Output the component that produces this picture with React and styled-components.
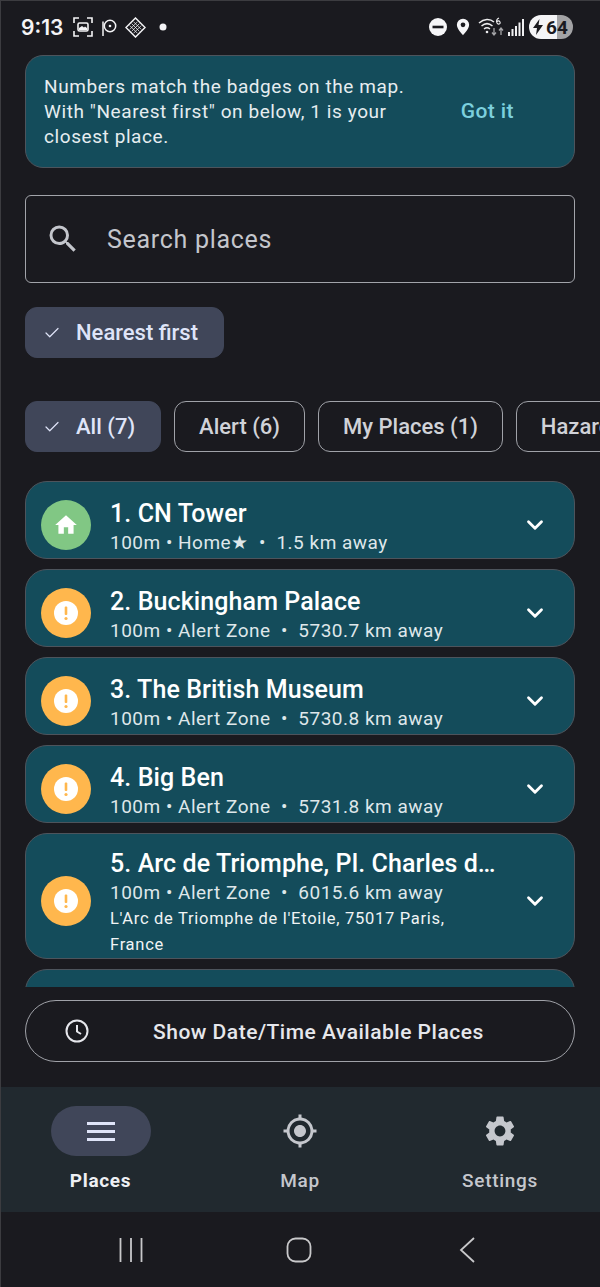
import React from "react";
import styled, { createGlobalStyle } from "styled-components";
import { Check, ChevronDown } from "lucide-react";

const GlobalStyle = createGlobalStyle`
  html, body {
    margin: 0;
    padding: 0;
    background: #1a1a1f;
    font-family: Roboto, "Noto Sans", sans-serif;
  }
  * {
    box-sizing: border-box;
  }
`;

const Screen = styled.div`
  display: flex;
  flex-direction: column;
  width: 600px;
  height: 1287px;
  overflow: hidden;
  background: #1a1a1f;
  border-left: 1px solid #3c3c40;
  border-top: 1px solid #3c3c40;
`;

const StatusBar = styled.div`
  display: flex;
  justify-content: space-between;
  align-items: center;
  height: 54px;
  padding: 0 27px 2px 20px;
  color: #f4f4f6;
  flex: none;
`;

const StatusGroup = styled.div`
  display: flex;
  align-items: center;
`;

const StatusIcon = styled.svg`
  margin-left: ${(p) => p.$left || 0}px;
  flex: none;
`;

const Time = styled.span`
  font-family: Inter, Roboto, sans-serif;
  font-size: 21px;
  font-weight: 600;
  width: 43px;
  white-space: nowrap;
`;

const Battery = styled.div`
  display: flex;
  align-items: center;
  gap: 3px;
  width: 44px;
  height: 24px;
  margin-left: 5px;
  padding-left: 4px;
  border-radius: 12px;
  color: #1a1a1f;
  font-family: Roboto, sans-serif;
  font-size: 19px;
  font-weight: 700;
  background: linear-gradient(to right, #f4f4f6 0 64%, #a3a3a5 64% 100%);
`;

const Main = styled.div`
  display: flex;
  flex-direction: column;
  padding: 0 25px 0 24px;
  flex: none;
  height: 1007px;
`;

const Banner = styled.div`
  display: flex;
  align-items: center;
  justify-content: space-between;
  flex: none;
  height: 113px;
  padding: 0 60px 0 18px;
  background: #144c5b;
  border: 1px solid #4d545c;
  border-radius: 18px;
  color: #e6edf0;
  font-size: 19px;
  line-height: 25px;
  letter-spacing: 0.58px;
`;

const BannerAction = styled.span`
  color: #7cd0de;
  font-size: 21px;
  font-weight: 500;
  letter-spacing: 0.4px;
`;

const SearchBox = styled.div`
  display: flex;
  align-items: center;
  gap: 26px;
  flex: none;
  height: 88px;
  margin-top: 27px;
  padding-left: 19px;
  border: 1px solid #a2a4aa;
  border-radius: 6px;
  color: #c4c6cc;
  font-size: 25px;
  letter-spacing: 0.7px;
`;

const ChipRow = styled.div`
  display: flex;
  gap: 13px;
  margin-top: ${(p) => p.$top}px;
  width: 600px;
  flex: none;
`;

const Chip = styled.div`
  display: flex;
  align-items: center;
  flex: none;
  gap: 15px;
  height: 51px;
  padding: ${(p) => (p.$selected ? "0 25px 0 17px" : "0 24px")};
  border-radius: 12px;
  border: 1px solid ${(p) => (p.$selected ? "#404659" : "#a0a2a8")};
  background: ${(p) => (p.$selected ? "#404659" : "transparent")};
  color: ${(p) => (p.$selected ? "#dfe4f8" : "#d0d2d8")};
  font-size: 22px;
  font-weight: 500;
`;

const List = styled.div`
  display: flex;
  flex-direction: column;
  gap: 10px;
  height: 506px;
  margin-top: 29px;
  overflow: hidden;
  flex: none;
`;

const Card = styled.div`
  display: flex;
  align-items: center;
  flex: none;
  height: ${(p) => (p.$tall ? 126 : 78)}px;
  padding: 10px 26px 0 15px;
  background: #144c5b;
  border: 1px solid #4d545c;
  border-radius: 22px;
`;

const Badge = styled.div`
  display: flex;
  align-items: center;
  justify-content: center;
  width: 50px;
  height: 50px;
  border-radius: 50%;
  background: ${(p) => p.$color};
  flex: none;
`;

const CardBody = styled.div`
  flex: 1;
  min-width: 0;
  margin: 5px 24px 0 19px;
`;

const CardTitle = styled.div`
  color: #ffffff;
  font-size: 25px;
  font-weight: 500;
  line-height: 30px;
  letter-spacing: 0.1px;
  white-space: nowrap;
  overflow: hidden;
  text-overflow: ellipsis;
`;

const CardMeta = styled.div`
  color: #dfe7ea;
  font-size: 19px;
  line-height: 26px;
  letter-spacing: 0.5px;
  margin-top: 1px;
  white-space: pre;
`;

const CardAddress = styled.div`
  color: #f0f4f5;
  font-size: 16.5px;
  font-weight: 400;
  line-height: 26px;
  letter-spacing: 0.72px;
  max-width: 345px;
`;

const TimeButton = styled.div`
  display: flex;
  align-items: center;
  flex: none;
  height: 62px;
  margin-top: 13px;
  padding-left: 39px;
  border: 1px solid #a0a2a8;
  border-radius: 31px;
  color: #e6e7ec;
  font-size: 21px;
  font-weight: 500;
  letter-spacing: 0.5px;
`;

const TimeLabel = styled.span`
  margin-left: 64px;
  padding-top: 1px;
`;

const NavBar = styled.div`
  display: grid;
  grid-template-columns: 199px 200px 200px;
  height: 125px;
  margin-top: 25px;
  background: #21292f;
  flex: none;
`;

const NavItem = styled.div`
  display: flex;
  flex-direction: column;
  align-items: center;
  padding-top: 19px;
  color: ${(p) => (p.$active ? "#eef0f4" : "#c5c7cd")};
  font-size: 19px;
  font-weight: ${(p) => (p.$active ? 700 : 500)};
  letter-spacing: 0.7px;
`;

const NavIcon = styled.div`
  display: flex;
  align-items: center;
  justify-content: center;
  width: 100px;
  height: 50px;
  border-radius: 25px;
  background: ${(p) => (p.$active ? "#404659" : "transparent")};
  margin-bottom: 13px;
`;

const SystemBar = styled.div`
  display: flex;
  flex: 1;
  align-items: center;
  justify-content: center;
  padding-right: 3px;
`;

const SystemSlot = styled.div`
  display: flex;
  justify-content: center;
  width: 168px;
`;

const HomeIcon = () => (
  <svg width="26" height="26" viewBox="0 0 24 24" fill="#fff">
    <path d="M10 20v-6h4v6h5v-8h3L12 3 2 12h3v8z" />
  </svg>
);

const AlertIcon = () => (
  <svg width="26" height="26" viewBox="0 0 26 26">
    <circle cx="13" cy="13" r="12" fill="#fff" />
    <rect x="11.7" y="6.5" width="2.6" height="8.5" rx="1" fill="#ffb74d" />
    <circle cx="13" cy="18.5" r="1.6" fill="#ffb74d" />
  </svg>
);

const cards = [
  { n: "1. CN Tower", meta: "100m • Home★  •  1.5 km away", home: true },
  { n: "2. Buckingham Palace", meta: "100m • Alert Zone  •  5730.7 km away" },
  { n: "3. The British Museum", meta: "100m • Alert Zone  •  5730.8 km away" },
  { n: "4. Big Ben", meta: "100m • Alert Zone  •  5731.8 km away" },
  {
    n: "5. Arc de Triomphe, Pl. Charles de Gaulle",
    meta: "100m • Alert Zone  •  6015.6 km away",
    address: "L'Arc de Triomphe de l'Etoile, 75017 Paris, France",
  },
];

export default function App() {
  return (
    <Screen>
      <GlobalStyle />
      <StatusBar>
        <StatusGroup>
          <Time>9:13</Time>
          <StatusIcon $left={9} width="20" height="20" viewBox="0 0 20 20" fill="none" stroke="#f4f4f6" strokeWidth="1.6">
            <path d="M1 6V1h5M14 1h5v5M19 14v5h-5M6 19H1v-5" />
            <rect x="5" y="6" width="10" height="8" rx="1.5" />
            <path d="M6 11l3-2 2 1.5 1-1 2 1.5v2H6z" fill="#f4f4f6" stroke="none" />
          </StatusIcon>
          <StatusIcon $left={9} width="15" height="18" viewBox="0 0 15 18" fill="none" stroke="#f4f4f6" strokeWidth="1.5">
            <path d="M1 18V3.5" />
            <circle cx="8" cy="8" r="5.7" />
            <circle cx="8" cy="8" r="1.3" fill="#f4f4f6" stroke="none" />
          </StatusIcon>
          <StatusIcon $left={8} width="21" height="21" viewBox="0 0 22 22" fill="none" stroke="#f4f4f6" strokeWidth="1.5">
            <path d="M11 1l10 10-10 10L1 11z" />
            <path d="M7 7l8 8M5 9l8 8M9 5l8 8M15 7l-8 8M17 9l-8 8M13 5l-8 8" strokeWidth="1" opacity="0.8" />
          </StatusIcon>
          <StatusIcon $left={13} width="8" height="8" viewBox="0 0 8 8">
            <circle cx="4" cy="4" r="3.5" fill="#f4f4f6" />
          </StatusIcon>
        </StatusGroup>
        <StatusGroup>
          <StatusIcon width="18" height="18" viewBox="0 0 18 18">
            <circle cx="9" cy="9" r="9" fill="#f6f6f8" />
            <rect x="3.5" y="7.7" width="11" height="2.6" fill="#1a1a1f" />
          </StatusIcon>
          <StatusIcon $left={9} width="14" height="18" viewBox="0 0 16 19">
            <path d="M8 0a7 7 0 0 1 7 7c0 4.500-5 9.500-7 12-2-2.500-7-7.500-7-12a7 7 0 0 1 7-7z" fill="#f6f6f8" />
            <circle cx="8" cy="7" r="2.700" fill="#1a1a1f" />
          </StatusIcon>
          <StatusIcon $left={8} width="26" height="20" viewBox="0 0 26 20" fill="none" stroke="#ececee" strokeWidth="1.5">
            <path d="M1 6c5-4.500 11-4.500 15-1M3.500 9c3.500-3 7.500-3 11 0M6 12c2-1.600 4-1.600 6 0" />
            <circle cx="9" cy="15" r="1.300" fill="#ececee" stroke="none" />
            <path d="M21 1c-2 1-3 3-2 5s4 1 3-1-3-1-3 0" strokeWidth="1.100" />
            <path d="M16 11v7M14 15.500l2 2.500 2-2.500M23 18v-7M21 13.500l2-2.500 2 2.500" stroke="#a5a5a8" strokeWidth="1.300" />
          </StatusIcon>
          <StatusIcon $left={4} width="16" height="17" viewBox="0 0 16 17" fill="#f0f0f2">
            <rect x="0" y="13" width="2" height="4" />
            <rect x="3.500" y="10" width="2" height="7" />
            <rect x="7" y="7" width="2" height="10" />
            <rect x="10.500" y="3.500" width="2" height="13.500" />
            <rect x="14" y="0" width="2" height="17" />
          </StatusIcon>
          <Battery>
            <svg width="10" height="16" viewBox="0 0 10 16" fill="#1a1a1f">
              <path d="M6.500 0L0 9h4l-1 7 7-10H5.500z" />
            </svg>
            64
          </Battery>
        </StatusGroup>
      </StatusBar>

      <Main>
        <Banner>
          <div>
            Numbers match the badges on the map.
            <br />
            With "Nearest first" on below, 1 is your
            <br />
            closest place.
          </div>
          <BannerAction>Got it</BannerAction>
        </Banner>

        <SearchBox>
          <svg width="36" height="36" viewBox="0 0 24 24" fill="#c4c6cc">
            <path d="M15.500 14h-.79l-.28-.27A6.470 6.470 0 0 0 16 9.500 6.500 6.500 0 1 0 9.500 16c1.610 0 3.090-.59 4.230-1.570l.27.28v.79l5 4.990L20.490 19l-4.990-5zm-6 0C7.010 14 5 11.990 5 9.500S7.010 5 9.500 5 14 7.010 14 9.500 11.990 14 9.500 14z" />
          </svg>
          Search places
        </SearchBox>

        <ChipRow $top={24}>
          <Chip $selected>
            <Check size={18} strokeWidth={1.6} />
            Nearest first
          </Chip>
        </ChipRow>

        <ChipRow $top={43}>
          <Chip $selected>
            <Check size={18} strokeWidth={1.6} />
            All (7)
          </Chip>
          <Chip>Alert (6)</Chip>
          <Chip>My Places (1)</Chip>
          <Chip>Hazard (0)</Chip>
        </ChipRow>

        <List>
          {cards.map((c) => (
            <Card key={c.n} $tall={!!c.address}>
              <Badge $color={c.home ? "#81c784" : "#ffb74d"}>
                {c.home ? <HomeIcon /> : <AlertIcon />}
              </Badge>
              <CardBody>
                <CardTitle>{c.n}</CardTitle>
                <CardMeta>{c.meta}</CardMeta>
                {c.address && <CardAddress>{c.address}</CardAddress>}
              </CardBody>
              <ChevronDown size={26} strokeWidth={2.6} color="#fff" />
            </Card>
          ))}
          <Card />
        </List>

        <TimeButton>
          <svg width="24" height="24" viewBox="0 0 24 24" fill="none" stroke="#e6e7ec" strokeWidth="2">
            <circle cx="12" cy="12" r="10.500" />
            <path d="M12 6v6.500l4 2.500" />
          </svg>
          <TimeLabel>Show Date/Time Available Places</TimeLabel>
        </TimeButton>
      </Main>

      <NavBar>
        <NavItem $active>
          <NavIcon $active>
            <svg width="30" height="22" viewBox="0 0 30 22" fill="#dfe4f8">
              <rect x="1" y="2" width="28" height="3" />
              <rect x="1" y="10" width="28" height="3" />
              <rect x="1" y="18" width="28" height="3" />
            </svg>
          </NavIcon>
          Places
        </NavItem>
        <NavItem>
          <NavIcon>
            <svg width="36" height="36" viewBox="0 0 24 24" fill="#c5c7cd">
              <path d="M12 8c-2.210 0-4 1.790-4 4s1.790 4 4 4 4-1.790 4-4-1.790-4-4-4zm8.940 3A8.994 8.994 0 0 0 13 3.060V1h-2v2.060A8.994 8.994 0 0 0 3.060 11H1v2h2.060A8.994 8.994 0 0 0 11 20.940V23h2v-2.060A8.994 8.994 0 0 0 20.940 13H23v-2h-2.060zM12 19c-3.870 0-7-3.130-7-7s3.130-7 7-7 7 3.130 7 7-3.130 7-7 7z" />
            </svg>
          </NavIcon>
          Map
        </NavItem>
        <NavItem>
          <NavIcon>
            <svg width="36" height="36" viewBox="0 0 24 24" fill="#c5c7cd">
              <path d="M19.140 12.940c.04-.3.060-.61.060-.94 0-.32-.02-.64-.07-.94l2.030-1.580a.49.49 0 0 0 .12-.61l-1.920-3.320a.488.488 0 0 0-.59-.22l-2.390.96c-.5-.38-1.030-.7-1.620-.94l-.36-2.540a.484.484 0 0 0-.48-.41h-3.840c-.24 0-.43.170-.47.410l-.36 2.540c-.59.240-1.130.570-1.620.94l-2.390-.96c-.22-.080-.47 0-.59.220L2.740 8.870c-.12.210-.08.470.12.610l2.030 1.580c-.05.300-.09.630-.09.940s.02.640.07.940l-2.030 1.580a.49.49 0 0 0-.12.610l1.920 3.320c.12.220.37.290.59.220l2.390-.96c.5.380 1.030.7 1.620.94l.36 2.540c.05.240.24.410.48.410h3.840c.24 0 .44-.17.47-.41l.36-2.540c.59-.24 1.130-.56 1.620-.94l2.390.96c.22.080.47 0 .59-.22l1.920-3.320c.12-.22.070-.47-.12-.61l-2.010-1.580zM12 15.600c-1.980 0-3.600-1.620-3.600-3.600s1.620-3.600 3.600-3.600 3.600 1.620 3.600 3.600-1.620 3.600-3.600 3.600z" />
            </svg>
          </NavIcon>
          Settings
        </NavItem>
      </NavBar>

      <SystemBar>
        <SystemSlot>
          <svg width="24" height="26" viewBox="0 0 24 26" fill="none" stroke="#c8c8ca" strokeWidth="1.800">
            <path d="M1.500 1v24M12 1v24M22.500 1v24" />
          </svg>
        </SystemSlot>
        <SystemSlot>
          <svg width="26" height="26" viewBox="0 0 26 26" fill="none" stroke="#c8c8ca" strokeWidth="1.800">
            <rect x="1.500" y="1.500" width="23" height="23" rx="8" />
          </svg>
        </SystemSlot>
        <SystemSlot>
          <svg width="18" height="26" viewBox="0 0 18 26" fill="none" stroke="#c8c8ca" strokeWidth="1.800">
            <path d="M16 1L3 13l13 12" />
          </svg>
        </SystemSlot>
      </SystemBar>
    </Screen>
  );
}
